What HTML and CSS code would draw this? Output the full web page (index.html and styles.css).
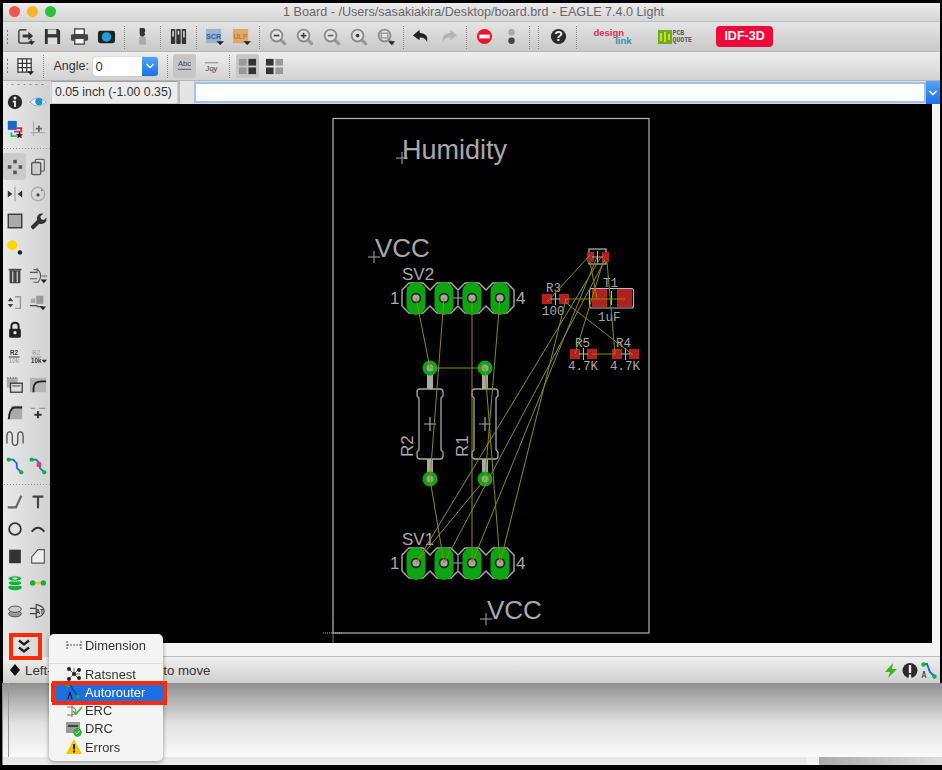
FILE: index.html
```html
<!DOCTYPE html>
<html>
<head>
  <meta charset="utf-8">
  <title>EAGLE board editor</title>
  <link rel="stylesheet" href="styles.css">
</head>
<body>
<svg class="defs" width="0" height="0">
  <defs>
    <g id="glass">
      <path d="M13 13l4.500 4.500" stroke="#9a9a9a" stroke-width="3.400" stroke-linecap="round"/>
      <circle cx="9" cy="9" r="6.200" fill="#e4e4e4" stroke="#8c8c8c" stroke-width="2"/>
    </g>
    <g id="header">
      <path d="M402 290l7-7h14l7 7 7-7h14l7 7 7-7h14l7 7 7-7h14l7 7v16l-7 7h-14l-7-7-7 7h-14l-7-7-7 7h-14l-7-7-7 7h-14l-7-7z" fill="none" stroke="#a8a8a8" stroke-width="1.400"/>
      <path d="M458 291v14M451 298h14" stroke="#a8a8a8" stroke-width="1.200"/>
      <g fill="#0aa510">
        <rect x="406.500" y="282" width="19" height="33" rx="9.500"/>
        <rect x="434.500" y="282" width="19" height="33" rx="9.500"/>
        <rect x="462.500" y="282" width="19" height="33" rx="9.500"/>
        <rect x="490.500" y="282" width="19" height="33" rx="9.500"/>
      </g>
      <g fill="#a9a9a0" stroke="#222" stroke-width="1.600">
        <circle cx="416" cy="298" r="4.400"/>
        <circle cx="444" cy="298" r="4.400"/>
        <circle cx="472" cy="298" r="4.400"/>
        <circle cx="500" cy="298" r="4.400"/>
      </g>
    </g>
    <g id="resistor">
      <rect x="-3" y="374" width="6" height="15" fill="#a8a8a8"/>
      <rect x="-3" y="459" width="6" height="15" fill="#a8a8a8"/>
      <path d="M-10 389h20q3 0 3 3v4l-2 2v52l2 2v4q0 3-3 3h-20q-3 0-3-3v-4l2-2v-52l-2-2v-4q0-3 3-3z" fill="none" stroke="#a8a8a8" stroke-width="1.300"/>
      <path d="M0 417v14M-6 424h12" stroke="#a8a8a8" stroke-width="1.200"/>
      <circle cy="368" r="5.500" fill="#a0a098" stroke="#0aa510" stroke-width="4"/>
      <circle cy="479" r="5.500" fill="#a0a098" stroke="#0aa510" stroke-width="4"/>
    </g>
    <g id="smd">
      <rect x="0" y="0" width="10" height="10" fill="#b2201f"/>
      <rect x="17" y="0" width="10" height="10" fill="#b2201f"/>
      <path d="M13.500 -1v12M9 5h9" stroke="#b8b8b8" stroke-width="1.100"/>
    </g>
  </defs>
</svg>

<div class="window">
  <div class="titlebar">
    <div class="lights">
      <span class="light red"></span>
      <span class="light yellow"></span>
      <span class="light green"></span>
    </div>
    <div class="title">1 Board - /Users/sasakiakira/Desktop/board.brd - EAGLE 7.4.0 Light</div>
  </div>

  <div class="toolbar">
    <span class="grip"></span>
    <span class="btn"><svg class="ic" viewBox="0 0 20 20"><path d="M11 3H5Q3 3 3 5v10q0 2 2 2h9q2 0 2-2v-2" fill="none" stroke="#555" stroke-width="1.800"/><path d="M7 8h6V5l5 4.500-5 4.500V11H7z" fill="#333"/><path d="M13 15h7l-3.500 4z" fill="#222"/></svg></span>
    <span class="btn"><svg class="ic" viewBox="0 0 20 20"><path d="M2 2h14l2 2v14H2z" fill="#333"/><rect x="5" y="2.500" width="9" height="5" fill="#ddd"/><rect x="5" y="11" width="10" height="7" fill="#ddd"/></svg></span>
    <span class="btn"><svg class="ic" viewBox="0 0 20 20"><rect x="5" y="2" width="10" height="6" fill="#fff" stroke="#444" stroke-width="1.400"/><rect x="1" y="7.500" width="18" height="7" rx="1.500" fill="#444"/><rect x="5" y="12" width="10" height="6" fill="#fff" stroke="#444" stroke-width="1.400"/></svg></span>
    <span class="btn"><svg class="ic" viewBox="0 0 20 20"><rect x="1" y="4" width="18" height="13" rx="2.500" fill="#222"/><circle cx="10" cy="10.500" r="5" fill="#1e9fe0"/></svg></span>
    <span class="sep"></span>
    <span class="btn"><svg class="ic" viewBox="0 0 20 20"><path d="M7 1h5l1 3-1 2 1 2-2 2H8L7 7z" fill="#333"/><rect x="6.500" y="10.500" width="7" height="8" fill="#aaa"/></svg></span>
    <span class="sep"></span>
    <span class="btn"><svg class="ic" viewBox="0 0 20 20"><g fill="#333"><rect x="2" y="2" width="4.600" height="16" rx="1"/><rect x="7.700" y="2" width="4.600" height="16" rx="1"/><rect x="13.400" y="2" width="4.600" height="16" rx="1"/></g><g fill="#ddd"><rect x="3.500" y="4" width="1.600" height="6"/><rect x="9.200" y="4" width="1.600" height="4"/><rect x="14.900" y="4" width="1.600" height="7"/></g></svg></span>
    <span class="sep"></span>
    <span class="btn"><svg class="ic" viewBox="0 0 20 20"><rect x="1" y="2" width="16" height="15" fill="#9fb3c8"/><text x="9" y="12.500" class="ic-code blue">SCR</text><path d="M12 15h8l-4 4z" fill="#222"/></svg></span>
    <span class="btn"><svg class="ic" viewBox="0 0 20 20"><rect x="1" y="2" width="16" height="15" fill="#d9ab72"/><text x="9" y="12.500" class="ic-code orange">ULP</text><path d="M12 15h8l-4 4z" fill="#222"/></svg></span>
    <span class="sep"></span>
    <span class="btn"><svg class="ic" viewBox="0 0 20 20"><use href="#glass"/><path d="M6 9h6" stroke="#444" stroke-width="1.800"/></svg></span>
    <span class="btn"><svg class="ic" viewBox="0 0 20 20"><use href="#glass"/><path d="M6 9h6M9 6v6" stroke="#444" stroke-width="1.800"/></svg></span>
    <span class="btn"><svg class="ic" viewBox="0 0 20 20"><use href="#glass"/><path d="M6 9h6" stroke="#666" stroke-width="1.800"/></svg></span>
    <span class="btn"><svg class="ic" viewBox="0 0 20 20"><use href="#glass"/><circle cx="9" cy="9" r="2" fill="#444"/></svg></span>
    <span class="btn"><svg class="ic" viewBox="0 0 20 20"><use href="#glass"/><rect x="5.500" y="6.500" width="7" height="5" fill="none" stroke="#888" stroke-width="1.200"/><path d="M13 15h7l-3.500 4z" fill="#222"/></svg></span>
    <span class="sep"></span>
    <span class="btn"><svg class="ic" viewBox="0 0 20 20"><path d="M8 3L1 9l7 5v-3q6-.5 8 5 2-9-8-10z" fill="#222"/></svg></span>
    <span class="btn"><svg class="ic" viewBox="0 0 20 20"><path d="M12 3l7 6-7 5v-3q-6-.5-8 5-2-9 8-10z" fill="#b4b4b4"/></svg></span>
    <span class="sep"></span>
    <span class="btn"><svg class="ic" viewBox="0 0 20 20"><circle cx="10" cy="10" r="8" fill="#f2102c"/><rect x="4.500" y="8" width="11" height="4" fill="#fff"/></svg></span>
    <span class="btn"><svg class="ic" viewBox="0 0 20 20"><circle cx="10" cy="5.500" r="3.400" fill="#aaa"/><circle cx="10" cy="14.500" r="3.400" fill="#444"/></svg></span>
    <span class="sep"></span>
    <span class="sep"></span>
    <span class="btn help"><svg class="ic" viewBox="0 0 20 20"><circle cx="10" cy="10" r="8" fill="#2a2a2a"/><text x="10" y="15" class="ic-help">?</text></svg></span>
    <span class="sep"></span>
    <span class="logo design"><span class="d1">design</span><span class="d2">link</span></span>
    <span class="logo quote">
      <svg width="14" height="14" viewBox="0 0 14 14"><rect width="14" height="14" fill="#6cae1e"/><path d="M3 3v8M7 2v10M11 4v6" stroke="#e8e23c" stroke-width="1.600"/></svg>
      <span class="quote-text">PCB<br>QUOTE</span>
    </span>
    <span class="idf">IDF-3D</span>
  </div>

  <div class="toolbar second">
    <span class="grip"></span>
    <span class="btn"><svg class="ic" viewBox="0 0 20 20"><path d="M2 2h14v14H2zM2 6.700h14M2 11.300h14M6.700 2v14M11.300 2v14" fill="#fff" stroke="#333" stroke-width="1.300"/><path d="M12 15h7l-3.500 4z" fill="#222"/></svg></span>
    <span class="sep"></span>
    <span class="angle-label">Angle:</span>
    <span class="combo"><span class="combo-value">0</span><span class="combo-arrow"><svg width="10" height="6" viewBox="0 0 10 6"><path d="M1.500 1L5 4.500 8.500 1" fill="none" stroke="#fff" stroke-width="1.500"/></svg></span></span>
    <span class="sep wide"></span>
    <span class="btn on"><svg class="ic" viewBox="0 0 20 20"><text x="10" y="9.500" class="ic-abc">Abc</text><path d="M3 13h14" stroke="#777" stroke-width="1.400"/></svg></span>
    <span class="btn"><svg class="ic" viewBox="0 0 20 20"><path d="M3 6h14" stroke="#999" stroke-width="1.400"/><text x="10" y="15" class="ic-abc">Jqy</text></svg></span>
    <span class="sep"></span>
    <span class="btn on"><svg class="ic" viewBox="0 0 20 20"><g fill="#999"><rect x="1" y="2" width="8" height="7"/><rect x="1" y="11" width="8" height="7"/></g><g fill="#333"><rect x="11" y="2" width="8" height="7"/><rect x="11" y="11" width="8" height="7"/></g></svg></span>
    <span class="btn"><svg class="ic" viewBox="0 0 20 20"><g fill="#333"><rect x="1" y="2" width="8" height="7"/><rect x="1" y="11" width="8" height="7"/></g><g fill="#999"><rect x="11" y="2" width="8" height="7"/><rect x="11" y="11" width="8" height="7"/></g></svg></span>
  </div>

  <div class="main">
    <div class="toolbox">
      <span class="hgrip"></span>
      <div class="tools">
        <span class="tool"><svg class="ic" viewBox="0 0 20 20"><circle cx="10" cy="10" r="8" fill="#2a2a2a"/><circle cx="10" cy="5.500" r="1.700" fill="#eee"/><path d="M7.500 8.500h3.500v7H9v-5H7.500z" fill="#eee"/></svg></span>
        <span class="tool"><svg class="ic" viewBox="0 0 20 20"><path d="M1 10q9-9 18 0-9 9-18 0z" fill="#f8f8f8" stroke="#999"/><circle cx="11" cy="9.500" r="4" fill="#1394dc"/></svg></span>
        <span class="tool"><svg class="ic" viewBox="0 0 20 20"><rect x="2" y="1" width="10" height="10" fill="#1c66c6"/><path d="M12 9h5v4H9" fill="none" stroke="#e81e50" stroke-width="2"/><path d="M6 14v4h6" fill="none" stroke="#1ec060" stroke-width="2"/><path d="M15 13l1.300 2.500 2.700.3-2 1.800.5 2.600-2.500-1.300-2.500 1.300.5-2.600-2-1.800 2.700-.3z" fill="#222"/></svg></span>
        <span class="tool"><svg class="ic" viewBox="0 0 20 20"><path d="M5 2v16M2 14h16" stroke="#aaa" stroke-width="1.200"/><path d="M11 6v7M7.500 9.500h7" stroke="#666" stroke-width="2"/></svg></span>
      </div>
      <span class="hdots"></span>
      <div class="tools">
        <span class="tool on"><svg class="ic" viewBox="0 0 20 20"><g fill="#555"><rect x="8" y="2" width="4" height="4"/><rect x="8" y="14" width="4" height="4"/><rect x="2" y="8" width="4" height="4"/><rect x="14" y="8" width="4" height="4"/></g></svg></span>
        <span class="tool"><svg class="ic" viewBox="0 0 20 20"><rect x="7" y="1.500" width="10" height="13" rx="1.500" fill="#ddd" stroke="#666" stroke-width="1.400"/><rect x="3" y="5" width="10" height="13.500" rx="1.500" fill="#ccc" stroke="#555" stroke-width="1.500"/></svg></span>
        <span class="tool"><svg class="ic" viewBox="0 0 20 20"><path d="M10 2v16" stroke="#999" stroke-width="1.200"/><path d="M2 6l5 4-5 4zM18 6l-5 4 5 4z" fill="#333"/></svg></span>
        <span class="tool"><svg class="ic" viewBox="0 0 20 20"><circle cx="10" cy="10" r="7.500" fill="none" stroke="#aaa" stroke-width="1.400"/><circle cx="10" cy="11" r="1.800" fill="#444"/><circle cx="14" cy="6" r="1" fill="#777"/></svg></span>
        <span class="tool"><svg class="ic" viewBox="0 0 20 20"><rect x="2.500" y="2.500" width="15" height="15" fill="#aaa" stroke="#333" stroke-width="1.500"/></svg></span>
        <span class="tool"><svg class="ic" viewBox="0 0 20 20"><path d="M3 18q-2-2 0-3l6-6q-1-5 3-7 2-.7 4 0l-3.500 3 1 3 3 1 3-3q.5 4-2 6-3 2-6 1l-6 6q-1.500 1-2.500-1z" fill="#333"/></svg></span>
        <span class="tool"><svg class="ic" viewBox="0 0 20 20"><circle cx="7" cy="7" r="5.500" fill="#ffd600"/><circle cx="15.500" cy="15" r="2.500" fill="#222"/></svg></span>
        <span class="tool"></span>
        <span class="tool"><svg class="ic" viewBox="0 0 20 20"><rect x="4" y="4" width="12" height="14" rx="1" fill="#444"/><path d="M7.500 5v12M12.500 5v12" stroke="#ccc" stroke-width="1.400"/><rect x="3" y="2" width="14" height="2" fill="#444"/></svg></span>
        <span class="tool"><svg class="ic" viewBox="0 0 20 20"><path d="M1 6h8M1 13h8M5 3h5q6 7 0 14H5" fill="none" stroke="#555" stroke-width="1.200"/><path d="M9 1v6M14 10h6" stroke="#555"/><path d="M13 14h7l-3.500 4z" fill="#222"/></svg></span>
        <span class="tool"><svg class="ic" viewBox="0 0 20 20"><path d="M5 4l3 4H2zM5 15l3-4H2z" fill="#444"/><path d="M10 3h6v13h-6" fill="none" stroke="#999" stroke-width="1.600"/></svg></span>
        <span class="tool"><svg class="ic" viewBox="0 0 20 20"><rect x="2" y="5" width="5" height="5" fill="#aaa"/><rect x="8" y="2" width="8" height="9" fill="#999"/><path d="M1 13h6q2 0 3 1h5" fill="none" stroke="#444" stroke-width="1.400"/><path d="M12 14h7l-3.500 4z" fill="#222"/></svg></span>
        <span class="tool"><svg class="ic" viewBox="0 0 20 20"><path d="M6 9V6q0-4 4-4t4 4v3" fill="none" stroke="#222" stroke-width="2.200"/><rect x="3.500" y="8.500" width="13" height="10" rx="1.500" fill="#222"/><circle cx="10" cy="13" r="1.800" fill="#eee"/></svg></span>
        <span class="tool"></span>
        <span class="tool"><svg class="ic" viewBox="0 0 20 20"><text x="9" y="8" class="ic-small dark">R2</text><path d="M3 10h12" stroke="#444" stroke-width="1.200"/><text x="9" y="17" class="ic-small pale">10k</text></svg></span>
        <span class="tool"><svg class="ic" viewBox="0 0 20 20"><text x="8" y="8" class="ic-small pale">R2</text><path d="M2 10h12" stroke="#999" stroke-width="1.200"/><text x="8" y="17" class="ic-small dark">10k</text><path d="M14 13h6l-3 3.500z" fill="#222"/></svg></span>
        <span class="tool"><svg class="ic" viewBox="0 0 20 20"><rect x="1" y="2" width="12" height="11" fill="#aaa"/><path d="M2 1v2M5 1v2M8 1v2M11 1v2" stroke="#666"/><rect x="5" y="8" width="13" height="10" fill="#ddd" stroke="#333" stroke-width="1.400"/><path d="M7 11h9" stroke="#333"/></svg></span>
        <span class="tool"><svg class="ic" viewBox="0 0 20 20"><rect x="1" y="2" width="18" height="16" fill="#b4b4b4"/><path d="M5 18v-4q0-8 9-8h5" fill="none" stroke="#222" stroke-width="2"/></svg></span>
        <span class="tool"><svg class="ic" viewBox="0 0 20 20"><path d="M3 18 6 3h12v15z" fill="#aaa"/><path d="M3 18q1-12 6-13h9" fill="none" stroke="#222" stroke-width="2"/></svg></span>
        <span class="tool"><svg class="ic" viewBox="0 0 20 20"><path d="M2 6h5M11 6h7" stroke="#999" stroke-width="1.200"/><path d="M10 9v8M6 13h8" stroke="#333" stroke-width="2.200"/></svg></span>
        <span class="tool"><svg class="ic" viewBox="0 0 20 20"><path d="M1 15V7q0-5 3-5t3 5v6q0 4 3 4t3-4V7q0-5 3-5t3 5v8" fill="none" stroke="#555" stroke-width="1.500"/></svg></span>
        <span class="tool"></span>
        <span class="tool"><svg class="ic" viewBox="0 0 20 20"><path d="M3 3h5l4 4v5l5 5" fill="none" stroke="#1570d8" stroke-width="2"/><circle cx="3" cy="3" r="2.400" fill="#16b13a"/><circle cx="17" cy="17" r="2.400" fill="#16b13a"/></svg></span>
        <span class="tool"><svg class="ic" viewBox="0 0 20 20"><path d="M3 3h5l4 4v5l5 5" fill="none" stroke="#1570d8" stroke-width="2"/><circle cx="3" cy="3" r="2.400" fill="#16b13a"/><circle cx="17" cy="17" r="2.400" fill="#16b13a"/><rect x="8.500" y="6" width="5" height="5" fill="#f2365e"/></svg></span>
      </div>
      <span class="hdots short"></span>
      <div class="tools">
        <span class="tool"><svg class="ic" viewBox="0 0 20 20"><path d="M2 16h9l6-13" fill="none" stroke="#666" stroke-width="2.400"/></svg></span>
        <span class="tool"><svg class="ic" viewBox="0 0 20 20"><path d="M4 4h12M10 4v13" stroke="#444" stroke-width="2.400"/></svg></span>
        <span class="tool"><svg class="ic" viewBox="0 0 20 20"><circle cx="10" cy="10" r="6.500" fill="none" stroke="#333" stroke-width="2"/></svg></span>
        <span class="tool"><svg class="ic" viewBox="0 0 20 20"><path d="M3 13q7-9 14 0" fill="none" stroke="#333" stroke-width="2.200"/></svg></span>
        <span class="tool"><svg class="ic" viewBox="0 0 20 20"><rect x="3.500" y="3" width="13" height="15" fill="#333"/></svg></span>
        <span class="tool"><svg class="ic" viewBox="0 0 20 20"><path d="M3 11 10 3h7v15H3z" fill="#eee" stroke="#555" stroke-width="1.300"/></svg></span>
        <span class="tool"><svg class="ic" viewBox="0 0 20 20"><ellipse cx="10" cy="15" rx="7.500" ry="3" fill="#16b13a"/><ellipse cx="10" cy="10" rx="7.500" ry="3" fill="#16b13a" stroke="#e4e4e4"/><ellipse cx="10" cy="5" rx="7.500" ry="3" fill="#16b13a" stroke="#e4e4e4"/><ellipse cx="10" cy="5" rx="3" ry="1" fill="#d8f0d8"/></svg></span>
        <span class="tool"><svg class="ic" viewBox="0 0 20 20"><path d="M3 10h14" stroke="#e8c820" stroke-width="2.400"/><circle cx="4" cy="10" r="3" fill="#16b13a"/><circle cx="16" cy="10" r="3" fill="#16b13a"/></svg></span>
        <span class="tool"><svg class="ic" viewBox="0 0 20 20"><ellipse cx="10" cy="13" rx="7" ry="3.500" fill="#999" stroke="#444"/><ellipse cx="10" cy="8" rx="7" ry="3.500" fill="#ccc" stroke="#444"/></svg></span>
        <span class="tool"><svg class="ic" viewBox="0 0 20 20"><path d="M8 2v16M8 3q8 1 9 7-1 6-9 7M1 7h7M1 13h7" fill="none" stroke="#444" stroke-width="1.300"/><text x="12" y="13" class="ic-small dark">AT</text></svg></span>
      </div>
      <span class="more">
        <svg width="14" height="15" viewBox="0 0 14 15"><path d="M2 1.500l5 4 5-4M2 8.500l5 4 5-4" fill="none" stroke="#222" stroke-width="2.400"/></svg>
      </span>
    </div>

    <div class="workarea">
      <div class="coordbar">
        <div class="coord">0.05 inch (-1.00 0.35)</div>
        <div class="coord-gap"></div>
        <div class="cmdline"></div>
        <div class="cmd-arrow"><svg width="10" height="6" viewBox="0 0 10 6"><path d="M1.500 1L5 4.500 8.500 1" fill="none" stroke="#fff" stroke-width="1.500"/></svg></div>
      </div>
      <svg class="board" viewBox="50 104 882 539">
        <rect x="333" y="118.500" width="316" height="514.500" fill="none" stroke="#b4b4b4" stroke-width="1.200"/>
        <path d="M333 620v23" stroke="#777"/>
        <path d="M323 633h20" stroke="#aaa" stroke-dasharray="1 1"/>

        <g class="cross" stroke="#a8a8a8" stroke-width="1">
          <path d="M402 152v12M396 158h12M374 251v12M368 257h12M486 613v12M480 619h12"/>
        </g>
        <text x="402" y="159" class="pcb big">Humidity</text>
        <text x="375" y="257" class="pcb vcc">VCC</text>
        <text x="487" y="619" class="pcb vcc">VCC</text>

        <use href="#header"/>
        <use href="#header" y="265"/>
        <text x="402" y="279.500" class="pcb mid">SV2</text>
        <text x="402" y="545" class="pcb mid">SV1</text>
        <text x="390" y="304" class="pcb mid">1</text>
        <text x="516" y="304" class="pcb mid">4</text>
        <text x="390" y="569" class="pcb mid">1</text>
        <text x="516" y="569" class="pcb mid">4</text>

        <use href="#resistor" x="430"/>
        <use href="#resistor" x="485"/>
        <text transform="translate(413 457) rotate(-90)" class="pcb mid">R2</text>
        <text transform="translate(468 457) rotate(-90)" class="pcb mid">R1</text>

        <!-- cap at the top -->
        <rect x="589" y="249" width="17" height="15" fill="none" stroke="#b8b8b8" stroke-width="1.200"/>
        <rect x="587" y="252" width="7" height="10" fill="#b2201f"/>
        <rect x="602" y="252" width="7" height="10" fill="#b2201f"/>
        <path d="M597.500 251v12M592 257h11" stroke="#b8b8b8"/>

        <use href="#smd" x="542" y="294"/>
        <use href="#smd" x="570" y="349"/>
        <use href="#smd" x="612" y="349"/>
        <rect x="589.500" y="288.500" width="44" height="19.500" rx="2" fill="none" stroke="#b8b8b8" stroke-width="1.200"/>
        <rect x="592" y="289" width="15" height="18" fill="#b2201f"/>
        <rect x="617" y="289" width="15" height="18" fill="#b2201f"/>
        <path d="M611.500 291v14" stroke="#b8b8b8"/>

        <text x="546" y="292" class="pcb tiny">R3</text>
        <text x="542" y="315" class="pcb tiny">100</text>
        <text x="603" y="287" class="pcb tiny">T1</text>
        <text x="598" y="321" class="pcb tiny">1uF</text>
        <text x="575" y="347" class="pcb tiny">R5</text>
        <text x="616" y="347" class="pcb tiny">R4</text>
        <text x="568" y="370" class="pcb tiny">4.7K</text>
        <text x="610" y="370" class="pcb tiny">4.7K</text>

        <g class="airwires" stroke="#8c8c00" stroke-width="1" fill="none">
          <path d="M416 298L430 368M444 298L430 479M472 298V563M500 298L485 479"/>
          <path d="M430 368H485M430 479L444 563M485 368L500 563"/>
          <path d="M416 563L485 479M416 563L601 257M444 563L605 260M472 563L597 257M500 563L566 299"/>
          <path d="M547 302L590 255M565 299H625M590 262L597 298M603 262L575 354M607 262L615 354M565 302L633 355M592 354H615"/>
        </g>
      </svg>
      <div class="hscroll"></div>
    </div>
  </div>

  <div class="statusbar">
    <svg class="status-mark" width="12" height="14" viewBox="0 0 12 14"><path d="M6 1l5 6-5 6-5-6z" fill="#111"/></svg>
    <span class="status-text">Left-click &amp; drag object to move</span>
    <span class="status-icons">
      <svg width="16" height="17" viewBox="0 0 16 17"><path d="M10 1L2 10h5l-2 6 9-9H9z" fill="#3cb81e"/></svg>
      <svg width="16" height="17" viewBox="0 0 16 17"><circle cx="8" cy="8.500" r="7.500" fill="#2a2a2a"/><rect x="6.800" y="3" width="2.400" height="8" fill="#eee"/><rect x="6.800" y="12.500" width="2.400" height="4" fill="#eee"/></svg>
      <svg width="16" height="17" viewBox="0 0 16 17"><path d="M2 2h4l3 8 5 5" fill="none" stroke="#1570d8" stroke-width="2"/><circle cx="2.500" cy="2.500" r="2.200" fill="#16b13a"/><circle cx="13.500" cy="14.500" r="2.200" fill="#16b13a"/><path d="M1 16l2-7 2 7M2 14h2" fill="none" stroke="#444"/></svg>
    </span>
  </div>
</div>

<div class="lower">
  <div class="lower-panel"></div>
  <div class="lower-foot"><span class="foot-tab"></span></div>
</div>

<!-- popup from the >> button -->
<div class="menu">
  <div class="menu-item first"><svg class="menu-ic" viewBox="0 0 16 16"><path d="M1 4v8M15 4v8M1 8h14" stroke="#555" stroke-dasharray="2 1"/></svg>Dimension</div>
  <div class="menu-sep"></div>
  <div class="menu-item"><svg class="menu-ic" viewBox="0 0 16 16"><path d="M3 3l10 10M13 3L3 13M8 8V2M8 8h6" stroke="#777"/><circle cx="3" cy="3" r="2" fill="#222"/><circle cx="13" cy="4" r="2" fill="#222"/><circle cx="8" cy="8" r="2" fill="#222"/><circle cx="3" cy="13" r="2" fill="#222"/><circle cx="13" cy="12" r="2" fill="#222"/></svg>Ratsnest</div>
  <div class="menu-item selected"><svg class="menu-ic" viewBox="0 0 16 16"><path d="M2 1h2l8 12" fill="none" stroke="#0a4a9a" stroke-width="1.500"/><circle cx="2" cy="1.500" r="2" fill="#16b13a"/><circle cx="12" cy="12.500" r="2" fill="#16b13a"/><path d="M2 15l2-7 2 7" fill="none" stroke="#111"/></svg>Autorouter</div>
  <div class="menu-item"><svg class="menu-ic" viewBox="0 0 16 16"><path d="M1 4h5q4 1 4 4t-4 4H1M6 2v12" fill="none" stroke="#777"/><path d="M7 8l3 3 6-7" fill="none" stroke="#3cb81e" stroke-width="1.600"/></svg>ERC</div>
  <div class="menu-item"><svg class="menu-ic" viewBox="0 0 16 16"><rect y="1" width="14" height="11" fill="#999"/><path d="M2 5h10" stroke="#222" stroke-width="1.500"/><circle cx="11.500" cy="11.500" r="4.200" fill="#2cb52c"/><path d="M9.500 11.500l1.500 1.500 2.500-3" fill="none" stroke="#fff"/></svg>DRC</div>
  <div class="menu-item"><svg class="menu-ic" viewBox="0 0 16 16"><path d="M8 0l8 15H0z" fill="#f7c600"/><rect x="7" y="5" width="2" height="5.500" fill="#222"/><rect x="7" y="11.500" width="2" height="2" fill="#222"/></svg>Errors</div>
</div>

<div class="mark mark-more"></div>
<div class="mark mark-auto"></div>
</body>
</html>
```

FILE: styles.css
```css
* {
  box-sizing: border-box;
}
html, body {
  margin: 0;
  height: 770px;
  overflow: hidden;
}
body {
  position: relative;
  background-color: #000;
  font-family: "Liberation Sans", Arial, sans-serif;
  color: #333;
}
.defs {
  position: absolute;
}

.window {
  margin: 3px 2px 0 3px;
  display: flex;
  flex-direction: column;
  filter: blur(0.45px);
}

/* title bar */
.titlebar {
  height: 19px;
  display: flex;
  align-items: center;
  background: linear-gradient(#ebebeb, #d5d5d5);
  border-bottom: 1px solid #bdbdbd;
}
.lights {
  display: flex;
  gap: 7px;
  margin-left: 6px;
  margin-top: -1px;
}
.light {
  width: 11px;
  height: 11px;
  border-radius: 50%;
}
.red { background-color: #f4544c; }
.yellow { background-color: #f9b42c; }
.green { background-color: #2cc13e; }
.title {
  flex: 1;
  text-align: center;
  font-size: 12.6px;
  color: #666;
  margin-right: 49px;
  white-space: nowrap;
}

/* toolbars */
.toolbar {
  height: 30px;
  display: flex;
  align-items: center;
  background: linear-gradient(#e4e4e4, #c9c9c9);
  border-bottom: 1px solid #b5b5b5;
}
.toolbar.second {
  height: 29px;
  background: linear-gradient(#eeeeee, #d2d2d2);
}
.grip {
  width: 7.5px;
  height: 16px;
  margin-left: 1px;
  background-image: radial-gradient(circle, #777 0.8px, transparent 1px);
  background-size: 3px 4px;
  background-repeat: repeat-y;
  background-position: 2px 0;
}
.btn {
  width: 27px;
  height: 24px;
  display: flex;
  align-items: center;
  justify-content: center;
  border-radius: 3px;
}
.btn.on {
  width: 23px;
  margin: 0 2px;
  background-color: #c6c6c6;
}
.btn.help {
  margin-left: 2px;
}
.sep {
  width: 9px;
  height: 24px;
  background-image: linear-gradient(#8a8a8a 50%, transparent 50%);
  background-size: 1px 2px;
  background-repeat: repeat-y;
  background-position: center;
}
.sep.wide {
  margin-left: 5px;
  margin-right: -1px;
}
.ic {
  width: 19px;
  height: 19px;
  display: block;
}
.ic-code {
  font-size: 7.5px;
  font-weight: 700;
  text-anchor: middle;
}
.blue { fill: #1c5fc0; }
.orange { fill: #e07a10; }
.ic-help {
  font-size: 15px;
  font-weight: 700;
  fill: #eee;
  text-anchor: middle;
}
.ic-abc {
  font-size: 8px;
  fill: #444;
  text-anchor: middle;
}
.ic-small {
  font-size: 7px;
  font-weight: 700;
  text-anchor: middle;
}
.dark { fill: #333; }
.pale { fill: #aaa; }

/* logos on the right of the first toolbar */
.logo {
  display: flex;
}
.design {
  flex-direction: column;
  width: 38px;
  margin-left: 13px;
  font-weight: 700;
  font-size: 9.5px;
  line-height: 8px;
}
.d1 { color: #d92f5c; }
.d2 {
  color: #1b9ab8;
  align-self: flex-end;
}
.quote {
  align-items: center;
  gap: 1px;
  margin-left: 26px;
}
.quote-text {
  font-family: "Liberation Mono", monospace;
  font-size: 6.5px;
  font-weight: 700;
  line-height: 7px;
  color: #555;
}
.idf {
  width: 57px;
  height: 21px;
  margin-left: 24px;
  background-color: #ee0a3a;
  border-radius: 4px;
  color: #f6f6f6;
  font-size: 12.5px;
  font-weight: 700;
  text-align: center;
  line-height: 21px;
}

/* angle combo */
.angle-label {
  margin-left: 6px;
  width: 39px;
  font-size: 12.5px;
  color: #333;
}
.combo {
  width: 65px;
  height: 19px;
  display: flex;
  background-color: #fff;
  border-radius: 3px;
  box-shadow: 0 0 1px #888;
}
.combo-value {
  flex: 1;
  padding-left: 3px;
  font-size: 13px;
  line-height: 19px;
}
.combo-arrow {
  width: 16px;
  display: flex;
  align-items: center;
  justify-content: center;
  background: linear-gradient(#52a3f5, #1c6fe8);
  border-radius: 0 3px 3px 0;
}

/* main area */
.main {
  height: 576px;
  display: flex;
}
.toolbox {
  width: 47px;
  flex: none;
  display: flex;
  flex-direction: column;
  background: linear-gradient(90deg, #e8e8e8, #d2d2d2);
}
.tools {
  display: grid;
  grid-template-columns: 23px 24px;
  grid-auto-rows: 27.25px;
}
.tool {
  display: flex;
  align-items: center;
  justify-content: center;
}
.tool.on {
  background-color: #cbcbcb;
  border-radius: 3px;
}
.tool .ic {
  width: 18px;
  height: 18px;
}
.hgrip, .hdots {
  flex: none;
  background-image: linear-gradient(90deg, #999 50%, transparent 50%);
  background-size: 3px 1px;
  background-repeat: repeat-x;
  background-position: center;
}
.hgrip {
  height: 7.5px;
  margin: 0 4px;
  background-image: linear-gradient(90deg, #888 30%, transparent 30%);
  background-size: 6px 1px;
}
.hdots {
  height: 10px;
}
.hdots.short {
  height: 8px;
}
.more {
  margin-top: 15px;
  padding-left: 14px;
  height: 16px;
}

.workarea {
  flex: 1;
  display: flex;
  flex-direction: column;
  min-width: 0;
  background-color: #f4f4f4;
}
.coordbar {
  height: 23px;
  display: flex;
  background-color: #dcdcdc;
  padding-left: 1px;
}
.coord {
  width: 127px;
  background-color: #ececec;
  border: 1px solid #cfcfcf;
  border-top-color: #9d9d9d;
  font-size: 12.3px;
  line-height: 20px;
  padding-left: 3px;
  white-space: nowrap;
}
.coord-gap {
  width: 16px;
  background-color: #e4e4e4;
  border-left: 2px solid #bbb;
}
.cmdline {
  flex: 1;
  margin: 1px 0;
  background-color: #fff;
  border: 2px solid #9ec3f0;
}
.cmd-arrow {
  width: 14px;
  display: flex;
  align-items: center;
  justify-content: center;
  background: linear-gradient(#52a3f5, #1c6fe8);
}
.board {
  display: block;
  width: 882px;
  height: 539px;
  background-color: #000;
  flex: none;
}
.hscroll {
  flex: 1;
  border-bottom: 1px solid #bbb;
}

.pcb {
  fill: #a8a8a8;
}
.big { font-size: 27px; }
.vcc { font-size: 26px; }
.mid { font-size: 17px; }
.tiny {
  font-family: "Liberation Mono", monospace;
  font-size: 12.5px;
}

/* status bar */
.statusbar {
  height: 26px;
  display: flex;
  align-items: center;
  background: linear-gradient(#efefef, #cfcfcf);
  padding: 0 3px 0 6px;
}
.status-text {
  margin-left: 4px;
  font-size: 13.3px;
  color: #333;
}
.status-icons {
  margin-left: auto;
  display: flex;
  gap: 3px;
}

/* window underneath */
.lower {
  margin-left: 2px;
  height: 82px;
  display: flex;
  flex-direction: column;
  filter: blur(0.35px);
}
.lower-panel {
  height: 74px;
  background: linear-gradient(#8f8f8f, #e2e2e2 55%, #fafafa);
  border-left: 1px solid #888;
}
.lower-panel::before {
  content: "";
  display: block;
  margin-left: 5px;
  height: 100%;
  border-left: 1px solid #999;
}
.lower-foot {
  height: 8px;
  background: linear-gradient(90deg, #e8e8e8 0, #e8e8e8 816px, #aaa 816px, #ddd 100%);
  display: flex;
  border-left: 1px solid #888;
}
.foot-tab {
  width: 12px;
  margin-left: 804px;
  background-color: #f2f2f2;
}

/* popup menu */
.menu {
  position: absolute;
  left: 49px;
  top: 634px;
  width: 114px;
  height: 127px;
  background-color: #f4f4f4;
  border-radius: 5px;
  box-shadow: 0 1px 4px rgba(0, 0, 0, 0.4);
  font-size: 12.9px;
  color: #333;
  filter: blur(0.3px);
}
.menu-item {
  height: 18.25px;
  display: flex;
  align-items: center;
  padding-left: 17px;
  white-space: nowrap;
}
.menu-item.first {
  height: 22px;
}
.menu-item.selected {
  background-color: #1b6fe0;
  color: #fff;
  margin-left: 2px;
  padding-left: 15px;
}
.menu-ic {
  width: 16px;
  height: 16px;
  margin-right: 3px;
  flex: none;
}
.menu-sep {
  height: 8px;
  margin-bottom: 1px;
  border-bottom: 1px solid #ddd;
}

/* red callouts over the screenshot */
.mark {
  position: absolute;
  border: 4px solid #ff2a00;
}
.mark-more {
  left: 9px;
  top: 633px;
  width: 33px;
  height: 27px;
}
.mark-auto {
  left: 52px;
  top: 681px;
  width: 115px;
  height: 24px;
}
```
